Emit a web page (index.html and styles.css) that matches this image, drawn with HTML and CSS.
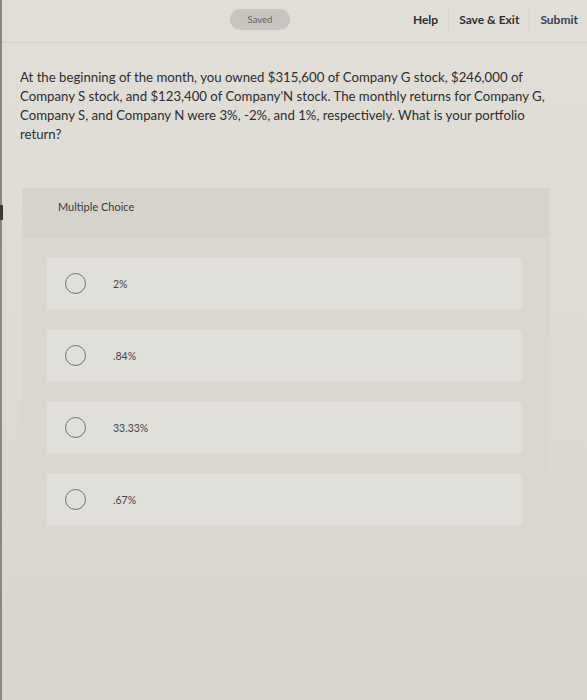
FILE: index.html
```html
<!DOCTYPE html>
<html lang="en">
<head>
<meta charset="utf-8">
<title>Multiple Choice</title>
<link rel="stylesheet" href="styles.css">
</head>
<body>
<div class="screen">
  <header class="topbar">
    <span class="saved">Saved</span>
    <nav class="actions">
      <span class="action">Help</span>
      <span class="sep"></span>
      <span class="action">Save &amp; Exit</span>
      <span class="sep"></span>
      <span class="action submit">Submit</span>
    </nav>
  </header>
  <main class="content">
    <p class="question">At the beginning of the month, you owned $315,600 of Company G stock, $246,000 of Company S stock, and $123,400 of Company'N stock. The monthly returns for Company G, Company S, and Company N were 3%, -2%, and 1%, respectively. What is your portfolio return?</p>
    <section class="card">
      <div class="card-head">Multiple Choice</div>
      <ul class="options">
        <li class="option"><span class="radio"></span><span class="label">2%</span></li>
        <li class="option"><span class="radio"></span><span class="label">.84%</span></li>
        <li class="option"><span class="radio"></span><span class="label">33.33%</span></li>
        <li class="option"><span class="radio"></span><span class="label">.67%</span></li>
      </ul>
    </section>
  </main>
  <span class="edge-mark"></span>
</div>
</body>
</html>
```
FILE: styles.css
```css
* { box-sizing: border-box; }
html, body { margin: 0; padding: 0; }
body {
  width: 587px;
  height: 700px;
  overflow: hidden;
  font-family: Lato, "Open Sans", "Liberation Sans", sans-serif;
  color: #2a2a2c;
  background: #d9d7d0;
}
.screen {
  position: relative;
  height: 700px;
  border-left: 2px solid #8a8884;
  background: linear-gradient(180deg, #e0ded7 0%, #dddbd4 45%, #d8d5ce 100%);
}
.topbar {
  height: 43px;
  display: flex;
  align-items: center;
  border-bottom: 1px solid #d2cfc8;
  padding-left: 228px;
  padding-right: 9px;
}
.saved {
  display: inline-flex;
  align-items: center;
  justify-content: center;
  width: 60px;
  height: 21px;
  margin-top: -3px;
  border-radius: 11px;
  background: #c9c4bf;
  color: #66635f;
  font-size: 9.5px;
}
.actions {
  margin-left: auto;
  display: flex;
  align-items: center;
  gap: 10px;
  margin-top: -4px;
}
.action {
  font-size: 12px;
  font-weight: 700;
  color: #2f2f31;
}
.submit { color: #3a3c58; }
.sep {
  width: 1px;
  height: 26px;
  background: #d6d3cc;
}
.content {
  padding: 25px 0 0 18px;
}
.question {
  margin: 0;
  width: 530px;
  font-size: 13.2px;
  line-height: 19px;
  color: #2e2e30;
}
.card {
  margin: 44px 38px 0 2px;
  background: #d9d7d0;
  padding-bottom: 42px;
}
.card-head {
  height: 50px;
  padding: 12px 0 0 36px;
  font-size: 11px;
  color: #3a3a3c;
  background: #d6d3cc;
}
.options {
  list-style: none;
  margin: 0;
  padding: 20px 27px 0 25px;
  display: flex;
  flex-direction: column;
  gap: 21px;
}
.option {
  height: 51px;
  display: flex;
  align-items: center;
  padding-left: 18px;
  background: #e1dfd9;
}
.radio {
  width: 21px;
  height: 21px;
  border: 1.5px solid #6f6d6b;
  border-radius: 50%;
  flex: none;
}
.label {
  margin-left: 27px;
  font-size: 10.5px;
  color: #46464a;
}
.edge-mark {
  position: absolute;
  left: -2px;
  top: 205px;
  width: 3px;
  height: 15px;
  background: #3a3938;
}
```
